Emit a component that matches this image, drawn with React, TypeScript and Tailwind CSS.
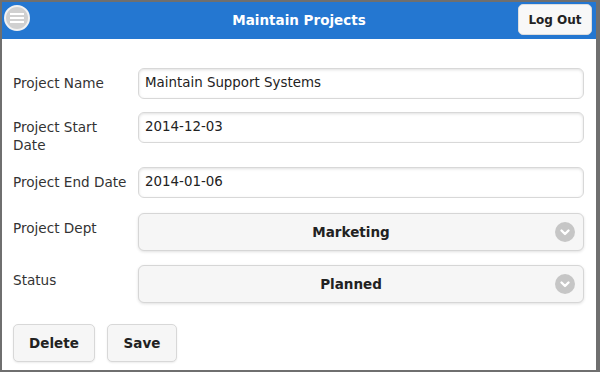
import { Fragment } from "react";

const font = { fontFamily: '"DejaVu Sans", Verdana, sans-serif' };

function Chevron() {
  return (
    <span className="flex h-[20px] w-[20px] items-center justify-center rounded-full bg-[#c6c6c6]">
      <svg width="12" height="12" viewBox="0 0 12 12" fill="none">
        <path d="M2.5 4.5L6 8L9.5 4.5" stroke="white" strokeWidth="2.4" strokeLinecap="round" strokeLinejoin="round" />
      </svg>
    </span>
  );
}

function TextInput({ value }: { value: string }) {
  return (
    <div className="flex h-[31px] flex-1 items-center rounded-[6px] border border-[#d8d8d8] bg-white px-[6px] text-[13.4px] text-[#222] shadow-[inset_0_1px_3px_rgba(0,0,0,0.12)]">
      {value}
    </div>
  );
}

function Select({ value }: { value: string }) {
  return (
    <div className="relative flex h-[38px] flex-1 items-center justify-center rounded-[6px] border border-[#d6d6d6] bg-[#f6f6f6] pr-[20px] text-[13.5px] font-bold text-[#222] shadow-[0_1px_3px_rgba(0,0,0,0.12)]">
      {value}
      <span className="absolute right-[8px] top-1/2 -translate-y-1/2">
        <Chevron />
      </span>
    </div>
  );
}

export default function App() {
  const rows = [
    { label: "Project Name", value: "Maintain Support Systems" },
    { label: "Project Start Date", value: "2014-12-03" },
    { label: "Project End Date", value: "2014-01-06" },
  ];

  return (
    <div style={font} className="h-[372px] w-[600px] overflow-hidden border-t-2 border-l-2 border-b-2 border-r-4 border-[#6f6f6f] bg-white">
      <header className="relative flex h-[37px] items-center justify-center bg-[#2477d1]">
        <span className="absolute left-[2px] top-[3px] flex h-[26px] w-[26px] items-center justify-center rounded-full border-2 border-[#f2f2f2] bg-[#d0d0d0]">
          <svg width="14" height="12" viewBox="0 0 14 12">
            <rect x="0" y="1" width="14" height="2" fill="white" />
            <rect x="0" y="5" width="14" height="2" fill="white" />
            <rect x="0" y="9" width="14" height="2" fill="white" />
          </svg>
        </span>
        <h1 className="text-[13.5px] font-bold text-white">Maintain Projects</h1>
        <button className="absolute right-[4px] top-[2px] h-[31px] w-[74px] rounded-[5px] border border-[#ddd] bg-[#f8f8f8] text-[12px] font-bold text-[#222]">
          Log Out
        </button>
      </header>

      <div className="pl-[11px] pr-[12px] pt-[29px]">
        {rows.map((r, i) => (
          <Fragment key={r.label}>
            <div className={`flex items-start ${i === 0 ? "" : "mt-[13px]"}`}>
              <label className={`w-[125px] pt-[6px] text-[13.6px] leading-[18px] text-[#333] ${r.label === "Project Start Date" ? "pr-[20px]" : ""}`}>
                {r.label}
              </label>
              <TextInput value={r.value} />
            </div>
          </Fragment>
        ))}

        <div className="mt-[15px] flex items-start">
          <label className="w-[125px] pt-[6px] text-[13.6px] leading-[18px] text-[#333]">Project Dept</label>
          <Select value="Marketing" />
        </div>
        <div className="mt-[14px] flex items-start">
          <label className="w-[125px] pt-[6px] text-[13.6px] leading-[18px] text-[#333]">Status</label>
          <Select value="Planned" />
        </div>

        <div className="mt-[21px] flex gap-[12px]">
          <button className="h-[38px] w-[82px] rounded-[5px] border border-[#d8d8d8] bg-[#f6f6f6] text-[13.5px] font-bold text-[#222] shadow-[0_1px_2px_rgba(0,0,0,0.08)]">
            Delete
          </button>
          <button className="h-[38px] w-[70px] rounded-[5px] border border-[#d8d8d8] bg-[#f6f6f6] text-[13.5px] font-bold text-[#222] shadow-[0_1px_2px_rgba(0,0,0,0.08)]">
            Save
          </button>
        </div>
      </div>
    </div>
  );
}
